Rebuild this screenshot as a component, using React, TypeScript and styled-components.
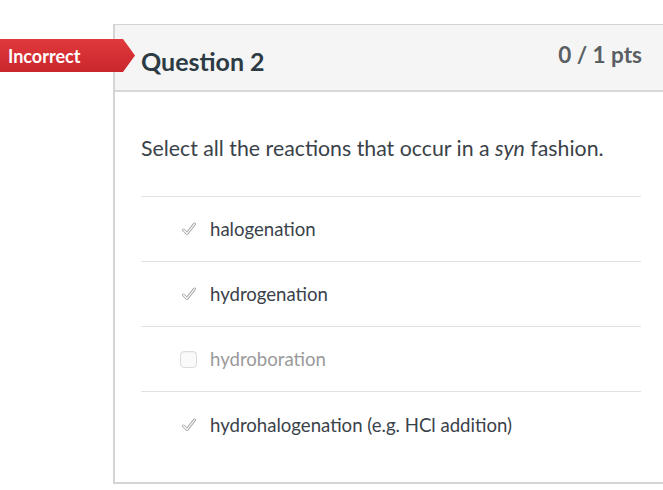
import React from "react";
import styled, { createGlobalStyle } from "styled-components";

const GlobalStyle = createGlobalStyle`
  html, body {
    margin: 0;
    padding: 0;
    background: #ffffff;
    overflow: hidden;
  }
  body {
    font-family: Lato, "Open Sans", "Liberation Sans", sans-serif;
    color: #2d3b45;
  }
`;

const Page = styled.div`
  width: 663px;
  height: 490px;
  padding: 24px 0 0 113px;
  box-sizing: border-box;
`;

const Card = styled.div`
  position: relative;
  width: 556px;
  height: 460px;
  box-sizing: border-box;
  border: 2px solid #d4d4d4;
  border-top-width: 1px;
  display: flex;
  flex-direction: column;
`;

const Header = styled.div`
  height: 67px;
  box-sizing: border-box;
  display: flex;
  align-items: center;
  justify-content: space-between;
  padding: 6px 25px 0 26px;
  background: #f5f5f5;
  border-bottom: 2px solid #d7d7d7;
`;

const Title = styled.div`
  font-size: 25px;
  font-weight: 700;
  color: #2d3b45;
`;

const Points = styled.div`
  font-size: 22.5px;
  font-weight: 700;
  color: #5a5f63;
  margin-top: -12px;
`;

const Tag = styled.div`
  position: absolute;
  left: -115px;
  top: 14px;
  height: 33px;
  width: 135px;
  display: flex;
  align-items: center;
  padding-left: 8px;
  box-sizing: border-box;
  color: #ffffff;
  font-size: 18px;
  font-weight: 700;
  background: linear-gradient(#e0393d, #c9262b);
  clip-path: polygon(0 0, 123px 0, 135px 50%, 123px 100%, 0 100%);
`;

const Body = styled.div`
  padding: 0 26px;
  display: flex;
  flex-direction: column;
`;

const Prompt = styled.div`
  font-size: 21.3px;
  color: #3a4249;
  padding: 43px 0 35px;
  border-bottom: 1px solid #e2e2e2;
  & em {
    font-style: italic;
  }
`;

const Option = styled.div<{ $last?: boolean }>`
  height: 65px;
  box-sizing: border-box;
  display: flex;
  align-items: center;
  padding-left: 39px;
  gap: 13px;
  border-bottom: ${(p) => (p.$last ? "none" : "1px solid #e2e2e2")};
`;

const IconBox = styled.div`
  width: 17px;
  height: 17px;
  display: flex;
  align-items: center;
  justify-content: center;
`;

const Box = styled.div`
  width: 15px;
  height: 15px;
  border: 1px solid #dcdcdc;
  border-radius: 4px;
  background: #fafafa;
  box-shadow: inset 0 1px 1px rgba(0, 0, 0, 0.04);
`;

const Label = styled.span<{ $muted?: boolean }>`
  font-size: 18.6px;
  color: ${(p) => (p.$muted ? "#9a9a9a" : "#3a4249")};
`;

const Check = () => (
  <svg width="16" height="16" viewBox="0 0 16 16">
    <path
      d="M2.5 9 L6 12.5 L13.5 3"
      fill="none"
      stroke="#a8a8a8"
      strokeWidth="3"
      strokeLinecap="round"
      strokeLinejoin="round"
    />
    <path
      d="M2.5 9 L6 12.5 L13.5 3"
      fill="none"
      stroke="#ffffff"
      strokeWidth="1.2"
      strokeLinecap="round"
      strokeLinejoin="round"
    />
  </svg>
);

const options = [
  { text: "halogenation", checked: true },
  { text: "hydrogenation", checked: true },
  { text: "hydroboration", checked: false },
  { text: "hydrohalogenation (e.g. HCl addition)", checked: true },
];

const App = () => {
  return (
    <Page>
      <GlobalStyle />
      <Card>
        <Tag>Incorrect</Tag>
        <Header>
          <Title>Question 2</Title>
          <Points>0 / 1 pts</Points>
        </Header>
        <Body>
          <Prompt>
            Select all the reactions that occur in a <em>syn</em> fashion.
          </Prompt>
          {options.map((o, i) => (
            <Option key={o.text} $last={i === options.length - 1}>
              <IconBox>{o.checked ? <Check /> : <Box />}</IconBox>
              <Label $muted={!o.checked}>{o.text}</Label>
            </Option>
          ))}
        </Body>
      </Card>
    </Page>
  );
};

export default App;
